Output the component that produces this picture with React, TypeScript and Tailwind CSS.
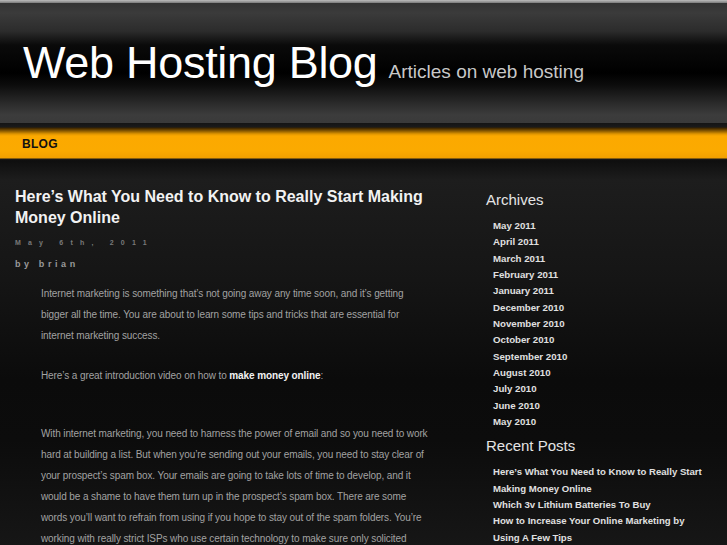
const archives = [
  "May 2011",
  "April 2011",
  "March 2011",
  "February 2011",
  "January 2011",
  "December 2010",
  "November 2010",
  "October 2010",
  "September 2010",
  "August 2010",
  "July 2010",
  "June 2010",
  "May 2010",
];

const recent = [
  "Here’s What You Need to Know to Really Start Making Money Online",
  "Which 3v Lithium Batteries To Buy",
  "How to Increase Your Online Marketing by Using A Few Tips",
];

export default function App() {
  return (
    <div className="h-[545px] overflow-hidden bg-[linear-gradient(to_bottom,#0e0e0e_160px,#111_164px,#1d1d1d_180px,#151515_280px,#0b0b0b_380px,#0c0c0c_440px,#161616_545px)] font-['Liberation_Sans',Arial,sans-serif]">
      <div className="h-[3px] bg-[linear-gradient(to_bottom,#bdbdbd,#7a7a7a)]" />
      <header className="h-[120px] flex items-baseline pt-[33px] pl-[23px] gap-[11px] bg-[linear-gradient(to_bottom,#333_0px,#3b3b3b_10px,#2c2c2c_28px,#0a0a0a_42px,#000_70px,#0c0c0c_82px,#2a2a2a_100px,#3c3c3c_112px,#3a3a3a_120px)]">
        <h1 className="text-[45px] leading-[54px] text-white tracking-[-0.3px]">Web Hosting Blog</h1>
        <span className="text-[19px] text-[#c8c8c8]">Articles on web hosting</span>
      </header>
      <nav className="h-[38px] bg-[linear-gradient(to_bottom,#141414_0px,#1a1a1a_4px,#3a2400_5px,#8a5a00_8px,#e09600_11px,#fca900_13px,#fbaa00_28px,#f2a000_35px,#1a1a1a_36px,#0c0c0c_38px)] flex items-center pl-[22px] pt-[4px]">
        <span className="text-[12px] font-bold text-[#111] tracking-[0.3px]">BLOG</span>
      </nav>
      <div className="flex">
        <main className="w-[416px] ml-[15px] pt-[25px]">
          <h2 className="text-[16px] leading-[21px] font-bold text-[#f2f2f2]">
            Here’s What You Need to Know to Really Start Making Money Online
          </h2>
          <div className="mt-[10px] text-[7px] font-bold tracking-[7.2px] text-[#7a7a7a]">May 6th, 2011</div>
          <div className="mt-[9px] text-[9px] font-bold tracking-[3.6px] text-[#9a9a9a]">by brian</div>
          <div className="pl-[26px] mt-[12px] text-[10px] leading-[21px] text-[#a2a2a2] tracking-[-0.1px]">
            <p>
              Internet marketing is something that’s not going away any time soon, and it’s getting bigger all the time. You are about to learn some tips and tricks that are essential for internet marketing success.
            </p>
            <p className="mt-[19px]">
              Here’s a great introduction video on how to <a className="font-bold text-[#f2f2f2]">make money online</a>:
            </p>
            <div className="h-[37px]" />
            <p>
              With internet marketing, you need to harness the power of email and so you need to work hard at building a list. But when you’re sending out your emails, you need to stay clear of your prospect’s spam box. Your emails are going to take lots of time to develop, and it would be a shame to have them turn up in the prospect’s spam box. There are some words you’ll want to refrain from using if you hope to stay out of the spam folders. You’re working with really strict ISPs who use certain technology to make sure only solicited emails get through.
            </p>
          </div>
        </main>
        <aside className="ml-auto w-[241px] pt-[29px]">
          <h3 className="text-[15px] leading-[20px] text-[#e4e4e4]">Archives</h3>
          <ul className="mt-[8px] pl-[7px]">
            {archives.map((a) => (
              <li key={a} className="text-[9.7px] leading-[16.33px] font-bold text-[#e0e0e0]">{a}</li>
            ))}
          </ul>
          <h3 className="mt-[6px] text-[15px] leading-[20px] text-[#e4e4e4]">Recent Posts</h3>
          <ul className="mt-[8px] pl-[7px] pr-[20px]">
            {recent.map((r) => (
              <li key={r} className="text-[9.6px] leading-[16.33px] font-bold text-[#e0e0e0]">{r}</li>
            ))}
          </ul>
        </aside>
      </div>
    </div>
  );
}
